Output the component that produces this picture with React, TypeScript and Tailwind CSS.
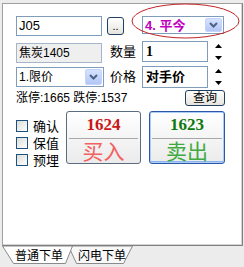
import React from 'react';

const font = { fontFamily: '"Liberation Sans", "Noto Sans CJK SC", sans-serif' };

function DropButton() {
  return (
    <div className="flex h-full w-[17px] items-center justify-center rounded-[2px] border border-[#c3d3fd] bg-gradient-to-b from-[#d6e2fe] to-[#b3c7f5]">
      <svg width="9" height="6" viewBox="0 0 9 6">
        <polyline points="1,1 4.5,4.5 8,1" fill="none" stroke="#4d6185" strokeWidth="2" />
      </svg>
    </div>
  );
}

function Spin() {
  return (
    <div className="ml-[6px] flex w-[9px] flex-col items-center justify-between py-[3px] h-full">
      <svg width="7" height="4" viewBox="0 0 7 4">
        <polygon points="0,4 3.5,0 7,4" fill="#000" />
      </svg>
      <svg width="7" height="4" viewBox="0 0 7 4">
        <polygon points="0,0 7,0 3.5,4" fill="#000" />
      </svg>
    </div>
  );
}

function Check({ label }: { label: string }) {
  return (
    <div className="flex h-[17px] items-start">
      <div className="h-[12px] w-[12px] border border-[#1c5180] bg-gradient-to-br from-[#dcdcd7] to-white" />
      <span className="ml-[5px] text-[13px] leading-[13px] text-black">{label}</span>
    </div>
  );
}

export default function App() {
  return (
    <div className="relative h-[267px] w-[244px] overflow-hidden bg-[#ececec] text-black" style={font}>
      {/* tab page */}
      <div className="ml-[2px] mt-[3px] h-[243px] w-[241px] border border-[#a0a0a0] border-b-[#808080] border-r-[#808080] bg-white">
        <div className="h-full border-b border-r border-[#d4d4d4] pl-[13px] pt-[12px]">
          {/* row 1 */}
          <div className="flex h-[20px] items-start">
            <div className="flex h-[20px] w-[86px] items-center border border-[#7f9db9] bg-white pl-[2px] text-[13px]">
              J05
            </div>
            <div className="ml-[5px] mt-[1px] flex h-[18px] w-[17px] items-end justify-center rounded-[3px] border border-[#1f3f63] bg-gradient-to-b from-white to-[#e6e4dc] pb-[2px] text-[11px] leading-[11px]">
              ..
            </div>
            <div className="ml-[18px] flex h-[18px] w-[82px] items-center justify-between border border-[#7f9db9] bg-white p-[1px]">
              <span className="pl-[1px] text-[13px] font-bold leading-[13px] text-[#c000c0]">4. 平今</span>
              <DropButton />
            </div>
          </div>

          {/* row 2 */}
          <div className="mt-[5px] flex h-[22px] items-start">
            <div className="mt-[2px] flex h-[20px] w-[86px] items-center border border-[#a5b6cc] bg-[#efefef] pl-[2px] text-[12px]">
              焦炭1405
            </div>
            <div className="flex h-full w-[40px] items-center pl-[8px] text-[13px]">数量</div>
            <div className="flex h-[21px] w-[66px] items-center border border-[#7f9db9] bg-white pl-[3px] text-[14px] font-bold" style={{ fontFamily: '"Liberation Serif", serif' }}>
              1
            </div>
            <Spin />
          </div>

          {/* row 3 */}
          <div className="mt-[3px] flex h-[22px] items-start">
            <div className="mt-[1px] flex h-[20px] w-[88px] items-center justify-between border border-[#7f9db9] bg-white p-[1px]">
              <span className="pl-[1px] text-[12px] leading-[12px]">1.限价</span>
              <DropButton />
            </div>
            <div className="flex h-full w-[38px] items-center pl-[6px] text-[13px]">价格</div>
            <div className="flex h-[22px] w-[66px] items-center border border-[#7f9db9] bg-white pl-[3px] text-[13px] font-bold">
              对手价
            </div>
            <Spin />
          </div>

          {/* row 4 */}
          <div className="mt-[2px] flex h-[16px] w-[209px] items-center justify-between">
            <span className="text-[12px] leading-[12px]">涨停:1665 跌停:1537</span>
            <div className="flex h-[16px] w-[40px] items-center justify-center rounded-[3px] border border-[#1f3f63] bg-gradient-to-b from-white to-[#e6e4dc] text-[12px] leading-[12px]">
              查询
            </div>
          </div>

          {/* row 5 */}
          <div className="mt-[5px] flex h-[53px] items-start">
            <div className="flex w-[50px] flex-col pt-[9px]">
              <Check label="确认" />
              <Check label="保值" />
              <Check label="预埋" />
            </div>
            <div className="flex h-[53px] w-[75px] flex-col rounded-[3px] border border-[#5b6b80] bg-gradient-to-b from-white to-[#ebebeb] px-[1px]">
              <div className="flex h-[26px] items-center justify-center text-[17px] font-bold text-[#c81818]" style={{ fontFamily: '"Liberation Serif", serif' }}>
                1624
              </div>
              <div className="mx-[1px] h-px bg-[#a8a8a8]" />
              <div className="flex flex-1 items-center justify-center text-[21px] leading-[21px] text-[#f26060]">买入</div>
            </div>
            <div className="ml-[8px] flex h-[53px] w-[76px] flex-col rounded-[3px] border border-[#2c56a6] bg-gradient-to-b from-white to-[#ebebeb] px-[1px] shadow-[inset_0_0_0_1px_#a9cdf6,inset_0_-2px_0_0_#8db5ec]">
              <div className="flex h-[26px] items-center justify-center text-[17px] font-bold text-[#0e7a0e]" style={{ fontFamily: '"Liberation Serif", serif' }}>
                1623
              </div>
              <div className="mx-[1px] h-px bg-[#a8a8a8]" />
              <div className="flex flex-1 items-center justify-center text-[21px] leading-[21px] text-[#3faa3f]">卖出</div>
            </div>
          </div>
        </div>
      </div>

      {/* bottom tabs */}
      <div className="relative h-[21px]">
        <svg className="absolute left-0 top-0" width="140" height="20" viewBox="0 0 140 20">
          <polygon points="68.5,0 76.5,17.5 123.5,17.5 132.5,0" fill="#f8f8f8" stroke="#8a8a8a" />
          <polygon points="2.5,0 13.5,17.5 65.5,17.5 72.5,0" fill="#ffffff" stroke="#8a8a8a" />
        </svg>
        <div className="relative flex pt-[4px] text-[12px] leading-[13px]">
          <span className="ml-[15px]">普通下单</span>
          <span className="ml-[15px]">闪电下单</span>
        </div>
      </div>

      {/* red annotation ellipse */}
      <svg className="pointer-events-none absolute left-0 top-0" width="244" height="60" viewBox="0 0 244 60">
        <ellipse cx="185.5" cy="21" rx="53.5" ry="17" fill="none" stroke="#c02424" strokeWidth="1" />
      </svg>
    </div>
  );
}
